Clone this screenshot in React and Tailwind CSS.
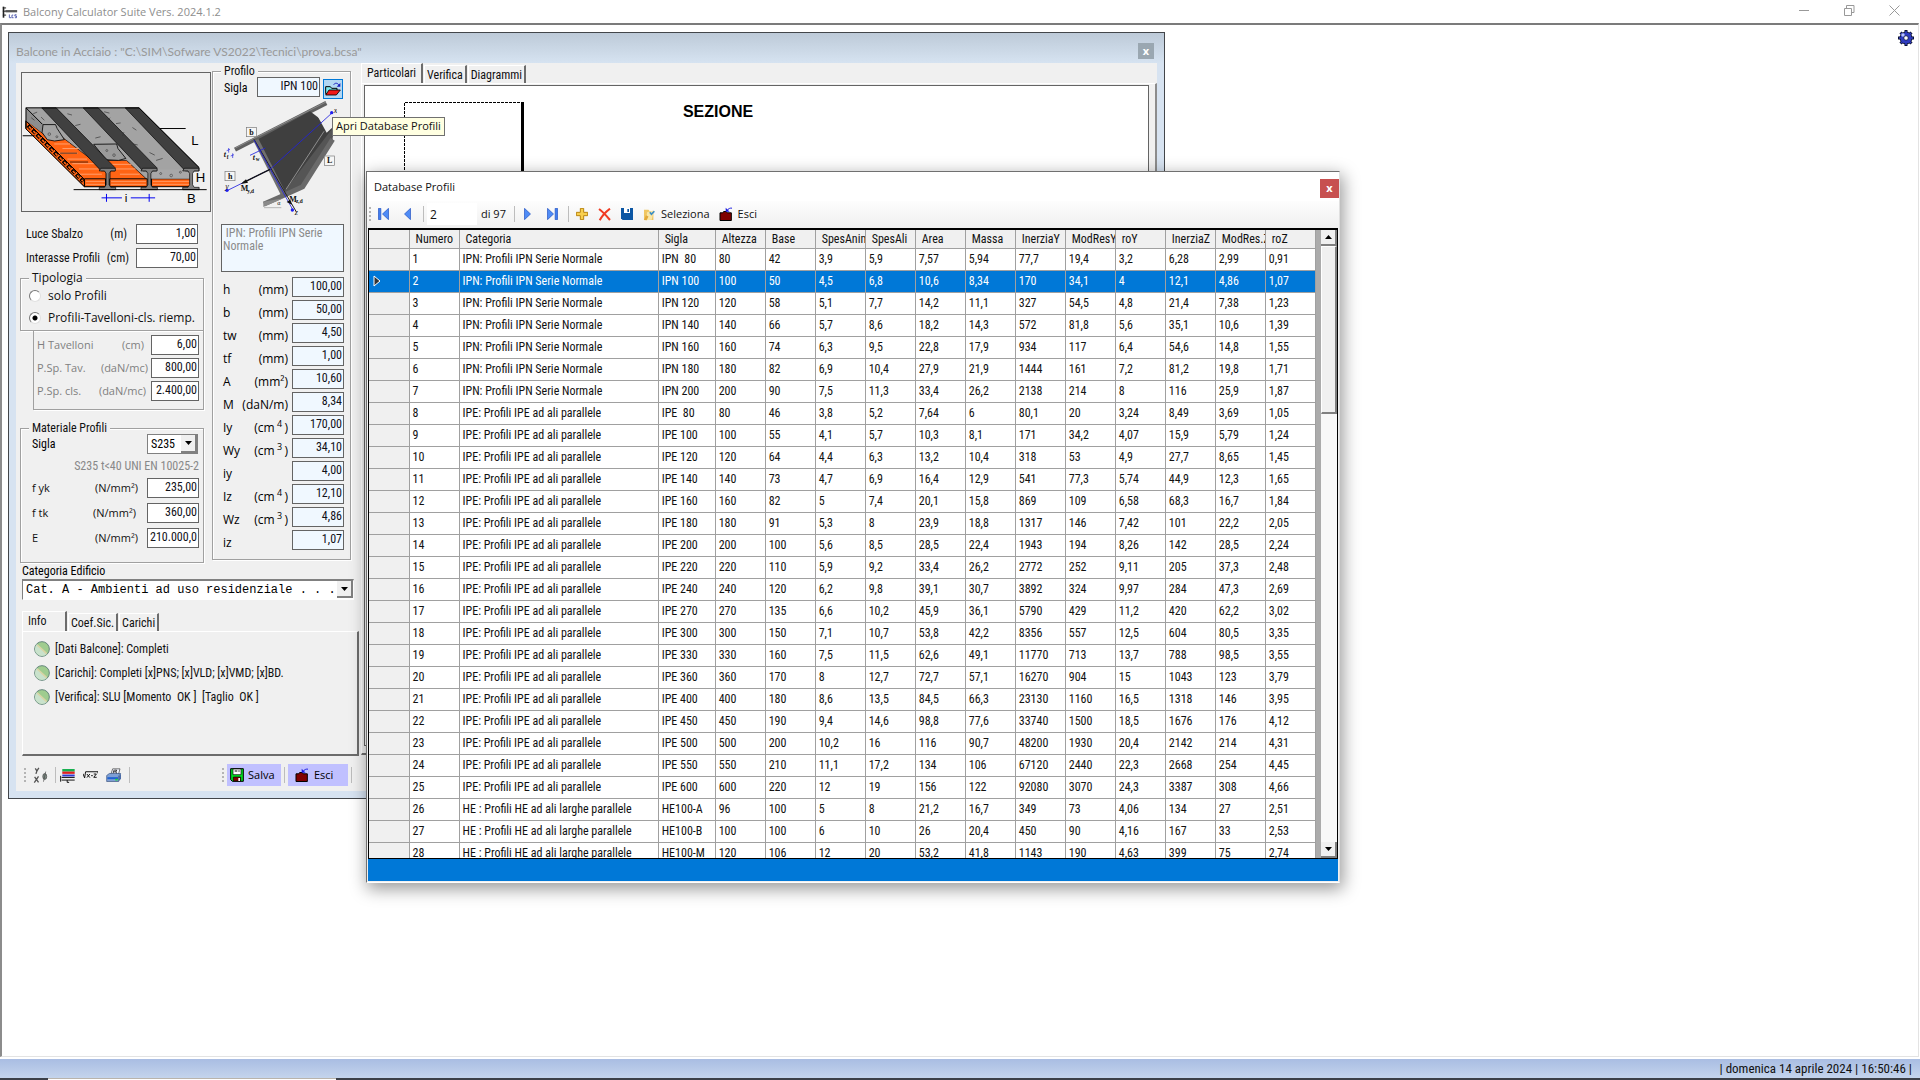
import React from 'react';

const COND = "font-['Roboto_Condensed',Roboto,sans-serif]";
const OPEN = "font-['Open_Sans',sans-serif]";

/* ---------- icons ---------- */

const AppIcon = () => (
  <svg viewBox="0 0 48 40" className="h-[13px] w-4 shrink-0">
    <path d="M4 2v34" stroke="#222" strokeWidth="5" />
    <path d="M2 6h10M2 16h10M2 28h10" stroke="#222" strokeWidth="3" />
    <path d="M10 16h36" stroke="#555" strokeWidth="7" />
    <path d="M22 26v10h6M34 28h-4v8h5M44 27h-5v4h5v5h-5" fill="none" stroke="#5560b0" strokeWidth="3" />
  </svg>
);

const GearIcon = () => (
  <svg viewBox="0 0 32 32" className="size-4">
    <g stroke="#0b1030" strokeWidth="6">
      <path d="M16 0v32M0 16h32M5 5l22 22M27 5L5 27" />
    </g>
    <circle cx="16" cy="16" r="12" fill="#2f3cc0" stroke="#0b1030" strokeWidth="2" />
    <g stroke="#2f3cc0" strokeWidth="3">
      <path d="M16 2v6M16 24v6M2 16h6M24 16h6M6 6l4 4M22 22l4 4M26 6l-4 4M10 22l-4 4" />
    </g>
    <circle cx="10" cy="10" r="3.5" fill="#b9c4ff" />
    <circle cx="16" cy="16" r="4.5" fill="#fff" stroke="#0b1030" strokeWidth="1.5" />
  </svg>
);

const FolderIcon = () => (
  <svg viewBox="0 0 48 42" className="h-[14px] w-4">
    <path d="M2 14h14l4 5h16v16H2z" fill="#7fe9ef" stroke="#000" strokeWidth="3" />
    <path d="M12 24h34L34 39H2z" fill="#f01818" stroke="#000" strokeWidth="2.5" />
    <path d="M26 8c4-6 12-6 16 2" fill="none" stroke="#1c1cc0" strokeWidth="3" />
    <path d="M46 3v11H35z" fill="#1c1cc0" />
  </svg>
);

const ExitIcon = () => (
  <svg viewBox="0 0 42 44" className="h-[15px] w-[14px]">
    <path d="M3 17h8l3-4h8l3 4h12v23H3z" fill="#800000" stroke="#000" strokeWidth="3" />
    <path d="M24 10c4-6 10-8 15-7" fill="none" stroke="#1c1ce0" strokeWidth="3" />
    <path d="M20 2v12h12z" fill="#1c1ce0" />
  </svg>
);

const DiskIcon = () => (
  <svg viewBox="0 0 42 42" className="size-[14px]">
    <path d="M2 2h38v38H7l-5-5z" fill="#00e020" stroke="#000" strokeWidth="3" />
    <path d="M9 3h24v17H9z" fill="#fff" stroke="#000" strokeWidth="2" />
    <path d="M14 9h8M25 9h4" stroke="#000" strokeWidth="3" />
    <path d="M10 27h22v12H10z" fill="#800000" stroke="#000" strokeWidth="2" />
    <path d="M25 30h5v9h-5z" fill="#fff" />
  </svg>
);

const BlueDisk = () => (
  <svg viewBox="0 0 36 36" className="size-3">
    <path d="M0 0h36v36H5l-5-5z" fill="#0b56a4" />
    <path d="M9 0h18v15H9z" fill="#fff" />
    <path d="M19 3h5v9h-5z" fill="#0b56a4" />
  </svg>
);

const Arrow = ({ left, bar }) => (
  <svg viewBox="0 0 32 36" className={left ? 'h-3 w-[11px]' : 'h-3 w-[11px] -scale-x-100'}>
    {bar && <path d="M1 1h7v34H1z" fill="#3f7df0" stroke="#1f4fc0" strokeWidth="2" />}
    <path d="M31 1v34L13 18z" fill="#4f8cf6" stroke="#1f4fc0" strokeWidth="2" />
  </svg>
);

const PlusIcon = () => (
  <svg viewBox="0 0 36 36" className="size-3">
    <path d="M13 1h10v12h12v10H23v12H13V23H1V13h12z" fill="#f8cf4e" stroke="#b88410" strokeWidth="3" />
  </svg>
);

const CrossIcon = () => (
  <svg viewBox="0 0 38 38" className="size-[13px]">
    <path d="M3 3c12 9 22 20 32 32M35 2C23 11 12 23 5 36" fill="none" stroke="#f03a22" strokeWidth="6" />
  </svg>
);

const SelectIcon = () => (
  <svg viewBox="0 0 38 40" className="size-[13px]">
    <path d="M2 5h14l3 4h12v28H2z" fill="#f0c661" />
    <path d="M12 12l20-4-6 28-18 2z" fill="#f9e6a6" />
    <path d="M8 22l8 4-6 12-8-1z" fill="#e2a93a" />
    <path d="M20 13l5 6 9-9" fill="none" stroke="#3c8ec4" strokeWidth="5" />
  </svg>
);

const FormulaIcon = () => (
  <svg viewBox="0 0 44 52" className="h-[17px] w-[15px]">
    <path d="M6 4l5 8 6-9M11 12l-3 9M4 30l12 17M16 29L3 48" fill="none" stroke="#555" strokeWidth="4" />
    <ellipse cx="35" cy="29" rx="6" ry="9" fill="#7d8b84" stroke="#444" strokeWidth="2" />
    <path d="M38 14l-7 31" stroke="#444" strokeWidth="2" />
  </svg>
);

const LayersIcon = () => (
  <svg viewBox="0 0 46 46" className="size-[15px]">
    <path d="M7 3h38v8H7z" fill="#18b050" />
    <path d="M7 11h38v7H7z" fill="#e02020" />
    <path d="M7 20h38v6H7z" fill="#3038d0" />
    <path d="M5 29h40M5 37h40" stroke="#111" strokeWidth="3" />
    <path d="M2 24v18M22 37v7h6" fill="none" stroke="#111" strokeWidth="3" />
  </svg>
);

const RootIcon = () => (
  <svg viewBox="0 0 46 24" className="h-2 w-[15px]">
    <path d="M0 8l5 13 3-19h38v5" fill="none" stroke="#111" strokeWidth="3" />
    <path d="M12 9l9 11M21 9l-9 11M25 14h5M33 9h8l-8 10h9" fill="none" stroke="#111" strokeWidth="3" />
  </svg>
);

const PrinterIcon = () => (
  <svg viewBox="0 0 48 44" className="h-[15px] w-4">
    <path d="M14 20L20 2h22l-5 18z" fill="#f4f6ff" stroke="#333" strokeWidth="2" />
    <path d="M24 6l-3 10M25 6h7l-2 5h-6M30 11l2 6" stroke="#111" strokeWidth="2.5" fill="none" />
    <path d="M2 22l8-6h34l-6 8v16H2z" fill="#7f9fd4" stroke="#36517e" strokeWidth="2" />
    <path d="M4 27h32v6H4z" fill="#1f62d0" />
    <path d="M38 24l7-8v16l-7 8z" fill="#4a6ba6" />
    <path d="M28 32h7v5h-7z" fill="#20e030" />
  </svg>
);

const StatusDot = () => (
  <svg viewBox="0 0 48 48" className="size-4 shrink-0">
    <circle cx="24" cy="24" r="22" fill="#9fcc8f" stroke="#64867c" strokeWidth="3" />
    <path d="M9 9l30 30a21 21 0 0 1-30 0 21 21 0 0 1 0-30z" fill="#c9e2cc" />
    <path d="M10 12l28 26" stroke="#d9d3a4" strokeWidth="5" />
  </svg>
);

const Chevron = () => (
  <svg viewBox="0 0 7 4" className="h-1 w-[7px]"><path d="M0 0h7L3.500 4z" fill="#000" /></svg>
);

/* ---------- drawings ---------- */

const SlabDrawing = () => (
  <svg viewBox="63 216 570 420" className="h-[140px] w-[190px] border border-[#646464]">
    <path d="M74 322H418L600 506V515H575V538L250 562L74 385z" fill="#a3a3a3" />
    <path d="M74 360L140 412H185L318 513V562H252L74 386z" fill="#ff6414" stroke="#000" strokeWidth="2" />
    <path d="M322 482H380L440 538V562H330V513z" fill="#ff6414" stroke="#000" strokeWidth="2" />
    <g stroke="#ffa070" strokeWidth="3">
      <path d="M160 432h48M185 446h50M172 460h60M200 478h60M215 492h70M235 508h60M225 524h80M335 494h60M345 508h62M360 524h60" />
    </g>
    <path d="M178 460h52M208 487h55" stroke="#000" strokeWidth="2" />
    <path d="M74 362L252 540V562L74 386z" fill="#ff6414" stroke="#000" strokeWidth="3" />
    <path d="M80 376l168 170" stroke="#000" strokeWidth="11" strokeDasharray="14 5" />
    <path d="M83 379l164 166" stroke="#ff6414" strokeWidth="5" strokeDasharray="9 10" />
    <path d="M252 538h64v24h-64zM329 538h114v24H329zM456 538h119v24H456z" fill="#ff6414" stroke="#000" strokeWidth="3" />
    <path d="M256 546h58M256 555h58M333 546h106M333 555h106M460 546h111M460 555h111" stroke="#ff9560" strokeWidth="3" />
    <path d="M74 322L162 409L140 418L124 397L74 361z" fill="#8d8d8d" />
    <path d="M74 322L124 372M74 322v63" stroke="#000" strokeWidth="3" />
    <path d="M126 373h38l5 12 22 34-30 4-22-4-16-22z" fill="#a3a3a3" stroke="#000" strokeWidth="2.500" />
    <path d="M280 433l70-1 4 14 24 30-22 6-38-2z" fill="#9b9b9b" stroke="#000" strokeWidth="2.500" />
    <path d="M462 510h112v28H456z" fill="#a8a8a8" />
    <g fill="#404040" stroke="#000" strokeWidth="2">
      <path d="M122 322h44L345 504v10h-42z" />
      <path d="M248 322h46L472 504v10h-42z" />
      <path d="M376 322h42L601 504v10h-42z" />
    </g>
    <g stroke="#000" strokeWidth="2">
      <path d="M302 506h44v8h-14l-5 8v34l5 8h15v7h-50v-7h16l5-8v-34l-5-8h-16z" fill="#808080" />
      <path d="M429 506h44v8h-14l-5 8v34l5 8h15v7h-50v-7h16l5-8v-34l-5-8h-16z" fill="#808080" />
      <path d="M556 506h44v8h-14l-5 8v34l5 8h15v7h-50v-7h16l5-8v-34l-5-8h-16z" fill="#808080" />
    </g>
    <path d="M74 322H418L601 504" fill="none" stroke="#000" strokeWidth="3" />
    <path d="M96 340l12-5M120 350l10 10M200 340l14 4M240 372l-16 4M232 392l12 10M285 414l16-4M312 334l16 4M348 370l14-2M372 396l-4 12M400 432l14 3M450 458l16 8M470 482l20-6M330 352l-8 8M398 382l12 8M90 352l10 8" stroke="#333" strokeWidth="2" fill="none" />
    <g fill="none" stroke="#444" strokeWidth="2">
      <circle cx="145" cy="402" r="4" /><circle cx="168" cy="410" r="3" /><circle cx="320" cy="452" r="3" /><circle cx="342" cy="466" r="4" />
      <circle cx="484" cy="522" r="3" /><circle cx="516" cy="528" r="4" /><circle cx="544" cy="518" r="3" />
    </g>
    <path d="M64 407h36M482 385h78M219 571h405" stroke="#000" strokeWidth="3" />
    <path d="M304 596h62M393 596h74M319 584v24M449 584v24" stroke="#0000f0" strokeWidth="3" />
    <g fontFamily="Liberation Sans" fontSize="40" fill="#000">
      <text x="577" y="435">L</text>
      <text x="591" y="549">H</text>
      <text x="564" y="612">B</text>
      <text x="375" y="609" fontSize="36">i</text>
    </g>
  </svg>
);

const ProfileDrawing = () => (
  <svg viewBox="663 300 348 354" className="mt-px h-[118px] w-[116px]">
    <path d="M705 449L979 309" stroke="#606060" strokeWidth="13" />
    <path d="M706 444L978 306" stroke="#8a8a8a" strokeWidth="3" />
    <path d="M770 420L930 334L998 385V410L908 556L852 578z" fill="#3f3f3f" />
    <path d="M946 336l34 62 18-16v-48z" fill="#f0f0f0" />
    <path d="M998 384L852 575l8 10 48-20 90-140z" fill="#555" />
    <path d="M972 394L858 568" stroke="#8e8e8e" strokeWidth="3" />
    <path d="M768 420L850 582" stroke="#707070" strokeWidth="16" />
    <path d="M792 612L852 586L908 560L998 418" fill="none" stroke="#6a6a6a" strokeWidth="15" />
    <path d="M790 605v16l60-26" fill="#8a8a8a" />
    <path d="M762 418L888 634" stroke="#222" strokeWidth="3" />
    <path d="M681 572L810 508L998 337M762 420L880 632M750 466l46-22" stroke="#2020e0" strokeWidth="2.500" fill="none" />
    <path d="M730 548l80-40" stroke="#111" strokeWidth="4" />
    <path d="M722 552l16-14 6 10zM876 614l-16-8 10-7z" fill="#111" />
    <g fill="#2020f0"><circle cx="995" cy="338" r="5" /><circle cx="681" cy="571" r="5" /><circle cx="877" cy="630" r="5" /></g>
    <path d="M686 444v14M680 452l10-4M698 460v14M692 468l10-4" stroke="#2020e0" strokeWidth="2" />
    <path d="M792 623h52" stroke="#999" strokeWidth="2" />
    <g fill="#f6f6f6" stroke="#777" strokeWidth="2">
      <rect x="739" y="382" width="30" height="28" /><rect x="973" y="468" width="30" height="28" /><rect x="675" y="514" width="30" height="28" />
    </g>
    <g fontFamily="Liberation Serif" fill="#111" fontSize="24" fontWeight="bold">
      <text x="748" y="405">b</text><text x="981" y="490">L</text><text x="684" y="536">h</text>
      <text x="671" y="472" fontStyle="italic">t</text><text x="680" y="478" fontSize="16">f</text>
      <text x="758" y="480" fontStyle="italic">t</text><text x="767" y="484" fontSize="16">w</text>
      <text x="722" y="574">M</text><text x="742" y="578" fontSize="16">y,d</text>
      <text x="868" y="606">M</text><text x="888" y="610" fontSize="16">z,d</text>
      <text x="1001" y="338" fontStyle="italic" fontWeight="normal">x</text>
      <text x="676" y="566" fontStyle="italic" fontWeight="normal">y</text>
      <text x="884" y="646" fontStyle="italic" fontWeight="normal">z</text>
      <text x="832" y="616" fontSize="18" fontWeight="normal">α</text>
    </g>
  </svg>
);

/* ---------- small controls ---------- */

const Grip = () => (
  <span className="flex w-[2px] flex-col gap-[2px]">
    {[0, 1, 2, 3].map((i) => <i key={i} className="block size-[2px] bg-[#b4b4b4]" />)}
  </span>
);

const Sep = () => <span className="block h-4 w-px bg-[#bdbdbd]" />;

const Value = ({ id, value, wide, blue }) => (
  <input
    id={id}
    type="text"
    defaultValue={value}
    className={`${COND} h-5 shrink-0 border border-[#646464] pr-px pb-[3px] text-right text-[12px] leading-4 text-[#101018] ${wide} ${blue ? 'bg-[#f0f8ff]' : 'bg-white'}`}
  />
);

const Field = ({ id, label, unit, value, width, cond, dim, pad = 'pr-[5px]' }) => (
  <div className="flex h-5 items-center">
    <label
      htmlFor={id}
      className={`flex flex-1 justify-between ${pad} ${cond ? COND + ' text-[12px]' : OPEN + ' text-[11px]'} ${dim ? 'text-[#808080]' : 'text-[#111]'}`}
    >
      <span>{label}</span>
      <span>{unit}</span>
    </label>
    <Value id={id} value={value} wide={width} />
  </div>
);

const Group = ({ title, className, children }) => (
  <fieldset className={`min-w-0 border border-[#a0a0a0] shadow-[1px_1px_0_#fff,inset_1px_1px_0_#fff] ${className}`}>
    <legend className={`${title.className} bg-[#f0f0f0] px-[3px] leading-3 text-[#111]`}>{title.text}</legend>
    {children}
  </fieldset>
);

const Tab = ({ active, children }) => (
  <button
    type="button"
    role="tab"
    aria-selected={!!active}
    className={`${COND} border-t border-r-2 border-l border-t-white border-r-[#6c6c6c] border-l-white text-[12px] leading-4 text-[#111] ${active ? 'h-5 pr-[5px] pb-px pl-[5px]' : 'h-[18px] px-[2px]'}`}
  >
    {children}
  </button>
);

/* ---------- data ---------- */

const I = 'IPN: Profili IPN Serie Normale';
const E = 'IPE: Profili IPE ad ali parallele';
const H = 'HE : Profili HE ad ali larghe parallele';
const columns = ['Numero', 'Categoria', 'Sigla', 'Altezza', 'Base', 'SpesAnima', 'SpesAli', 'Area', 'Massa', 'InerziaY', 'ModResY', 'roY', 'InerziaZ', 'ModRes.Z', 'roZ'];
const profiles = [
  [I, 'IPN  80', '80 42 3,9 5,9 7,57 5,94 77,7 19,4 3,2 6,28 2,99 0,91'],
  [I, 'IPN 100', '100 50 4,5 6,8 10,6 8,34 170 34,1 4 12,1 4,86 1,07'],
  [I, 'IPN 120', '120 58 5,1 7,7 14,2 11,1 327 54,5 4,8 21,4 7,38 1,23'],
  [I, 'IPN 140', '140 66 5,7 8,6 18,2 14,3 572 81,8 5,6 35,1 10,6 1,39'],
  [I, 'IPN 160', '160 74 6,3 9,5 22,8 17,9 934 117 6,4 54,6 14,8 1,55'],
  [I, 'IPN 180', '180 82 6,9 10,4 27,9 21,9 1444 161 7,2 81,2 19,8 1,71'],
  [I, 'IPN 200', '200 90 7,5 11,3 33,4 26,2 2138 214 8 116 25,9 1,87'],
  [E, 'IPE  80', '80 46 3,8 5,2 7,64 6 80,1 20 3,24 8,49 3,69 1,05'],
  [E, 'IPE 100', '100 55 4,1 5,7 10,3 8,1 171 34,2 4,07 15,9 5,79 1,24'],
  [E, 'IPE 120', '120 64 4,4 6,3 13,2 10,4 318 53 4,9 27,7 8,65 1,45'],
  [E, 'IPE 140', '140 73 4,7 6,9 16,4 12,9 541 77,3 5,74 44,9 12,3 1,65'],
  [E, 'IPE 160', '160 82 5 7,4 20,1 15,8 869 109 6,58 68,3 16,7 1,84'],
  [E, 'IPE 180', '180 91 5,3 8 23,9 18,8 1317 146 7,42 101 22,2 2,05'],
  [E, 'IPE 200', '200 100 5,6 8,5 28,5 22,4 1943 194 8,26 142 28,5 2,24'],
  [E, 'IPE 220', '220 110 5,9 9,2 33,4 26,2 2772 252 9,11 205 37,3 2,48'],
  [E, 'IPE 240', '240 120 6,2 9,8 39,1 30,7 3892 324 9,97 284 47,3 2,69'],
  [E, 'IPE 270', '270 135 6,6 10,2 45,9 36,1 5790 429 11,2 420 62,2 3,02'],
  [E, 'IPE 300', '300 150 7,1 10,7 53,8 42,2 8356 557 12,5 604 80,5 3,35'],
  [E, 'IPE 330', '330 160 7,5 11,5 62,6 49,1 11770 713 13,7 788 98,5 3,55'],
  [E, 'IPE 360', '360 170 8 12,7 72,7 57,1 16270 904 15 1043 123 3,79'],
  [E, 'IPE 400', '400 180 8,6 13,5 84,5 66,3 23130 1160 16,5 1318 146 3,95'],
  [E, 'IPE 450', '450 190 9,4 14,6 98,8 77,6 33740 1500 18,5 1676 176 4,12'],
  [E, 'IPE 500', '500 200 10,2 16 116 90,7 48200 1930 20,4 2142 214 4,31'],
  [E, 'IPE 550', '550 210 11,1 17,2 134 106 67120 2440 22,3 2668 254 4,45'],
  [E, 'IPE 600', '600 220 12 19 156 122 92080 3070 24,3 3387 308 4,66'],
  [H, 'HE100-A', '96 100 5 8 21,2 16,7 349 73 4,06 134 27 2,51'],
  [H, 'HE100-B', '100 100 6 10 26 20,4 450 90 4,16 167 33 2,53'],
  [H, 'HE100-M', '120 106 12 20 53,2 41,8 1143 190 4,63 399 75 2,74'],
];

const sup = (base, n) => <>({base}<sup className="text-[9px]">{n}</sup>)</>;
const props = [
  ['h', '(mm)', '100,00'], ['b', '(mm)', '50,00'], ['tw', '(mm)', '4,50'], ['tf', '(mm)', '1,00'],
  ['A', '(mm²)', '10,60'], ['M', '(daN/m)', '8,34'], ['Iy', sup('cm', ' 4 '), '170,00'], ['Wy', sup('cm', ' 3 '), '34,10'],
  ['iy', '', '4,00'], ['Iz', sup('cm', ' 4 '), '12,10'], ['Wz', sup('cm', ' 3 '), '4,86'], ['iz', '', '1,07'],
];

/* ---------- panels ---------- */

function LeftPanel() {
  return (
    <div className="flex w-[345px] shrink-0 flex-col pl-1">
      <div className="flex">
        <div className="flex w-[192px] flex-col pt-[9px]">
          <div className="pl-px"><SlabDrawing /></div>
          <div className="flex flex-col gap-1 pt-3 pr-[14px] pl-[6px]">
            <Field cond id="luce" label="Luce Sbalzo" unit="(m)" value="1,00" width="w-[62px]" pad="pr-[9px]" />
            <Field cond id="inter" label="Interasse Profili" unit="(cm)" value="70,00" width="w-[62px]" pad="pr-[7px]" />
          </div>
          <Group className="mt-1 mr-2 h-[59px] pl-2" title={{ text: 'Tipologia', className: OPEN + ' text-[12px]' }}>
            {['solo Profili', 'Profili-Tavelloni-cls. riemp.'].map((t, i) => (
              <label key={t} className={`${OPEN} flex h-[22px] items-center gap-[7px] pt-[2px] text-[12px] whitespace-nowrap text-[#111]`}>
                <input
                  type="radio"
                  name="tipo"
                  defaultChecked={i === 1}
                  className="size-3 shrink-0 appearance-none rounded-full border border-t-[#777] border-r-[#e0e0e0] border-b-[#e0e0e0] border-l-[#777] bg-white checked:bg-[radial-gradient(#000_0_2px,#fff_3px)]"
                />
                {t}
              </label>
            ))}
          </Group>
          <div className="mr-2 ml-[13px] flex flex-col gap-[3px] border border-t-0 border-[#a0a0a0] pt-1 pr-1 pb-2 pl-[3px] shadow-[1px_1px_0_#fff]">
            <Field dim id="htav" label="H Tavelloni" unit="(cm)" value="6,00" width="w-12" pad="pr-[7px]" />
            <Field dim id="ptav" label="P.Sp. Tav." unit="(daN/mc)" value="800,00" width="w-12" pad="pr-[3px]" />
            <Field dim id="pcls" label="P.Sp. cls." unit="(daN/mc)" value="2.400,00" width="w-12" />
          </div>
          <Group className="mt-3 mr-2 h-[141px] pr-1 pl-[11px]" title={{ text: 'Materiale Profili', className: COND + ' -ml-[3px] text-[12px]' }}>
            <div className="flex h-5 items-center justify-between pr-px">
              <label htmlFor="mat" className={`${COND} text-[12px]`}>Sigla</label>
              <div className="relative">
                <select id="mat" className={`${COND} block h-5 w-[51px] appearance-none border border-[#808080] bg-white pl-[3px] text-[12px] leading-4`}>
                  <option>S235</option>
                </select>
                <span className="pointer-events-none absolute inset-y-px right-px flex w-4 items-center justify-center border-r-2 border-b-2 border-[#808080] bg-[#f0f0f0]"><Chevron /></span>
              </div>
            </div>
            <p className={`${COND} h-6 text-right text-[12px] leading-6 whitespace-nowrap text-[#888]`}>S235 t&lt;40 UNI EN 10025-2</p>
            <div className="flex flex-col gap-[5px]">
              <Field id="fyk" label="f yk" unit="(N/mm²)" value="235,00" width="w-[52px]" pad="pr-[9px]" />
              <Field id="ftk" label="f tk" unit="(N/mm²)" value="360,00" width="w-[52px]" pad="pr-[11px]" />
              <Field id="e" label="E" unit="(N/mm²)" value="210.000,0" width="w-[52px]" pad="pr-[9px]" />
            </div>
          </Group>
        </div>

        <Group className="mt-[2px] h-[495px] w-[139px] pr-[6px] pl-2" title={{ text: 'Profilo', className: COND + ' text-[12px]' }}>
          <div className="-mt-[2px] flex items-center">
            <label htmlFor="sigla" className={`${COND} w-[36px] pt-[2px] pl-[3px] text-[12px]`}>Sigla</label>
            <Value id="sigla" value="IPN 100" wide="w-[63px]" blue />
            <button type="button" aria-label="Apri Database Profili" className="mt-1 ml-[3px] flex size-5 items-center justify-center border border-[#0078d7] bg-[#b3d7f3]"><FolderIcon /></button>
          </div>
          <ProfileDrawing />
          <textarea
            aria-label="Categoria profilo"
            defaultValue=" IPN: Profili IPN Serie Normale"
            className={`${COND} mt-[6px] mb-[5px] block h-12 w-[123px] resize-none overflow-hidden border border-[#646464] bg-[#f0f8ff] px-px pt-[2px] text-[12px] leading-[13px] text-[#8a8a8a]`}
          />
          <div className="flex flex-col gap-[3px]">
            {props.map(([l, u, v], i) => (
              <div key={l} className="flex h-5 items-center">
                <label htmlFor={'p' + i} className={`${OPEN} flex flex-1 justify-between pt-[5px] pr-[4px] pl-[2px] text-[12px] leading-4 whitespace-pre`}>
                  <span>{l}</span><span>{u}</span>
                </label>
                <Value id={'p' + i} value={v} wide="w-[52px]" blue />
              </div>
            ))}
          </div>
        </Group>
      </div>

      <label htmlFor="cat" className={`${COND} ml-[2px] text-[12px] leading-4`}>Categoria Edificio</label>
      <div className="relative ml-[2px] w-[332px]">
        <select id="cat" className="block h-[21px] w-full appearance-none border border-t-2 border-[#808080] border-r-white border-b-white bg-white pl-[3px] font-['Liberation_Mono',monospace] text-[12px] leading-4">
          <option>Cat. A - Ambienti ad uso residenziale . . .</option>
        </select>
        <span className="pointer-events-none absolute inset-y-[2px] right-px flex w-4 items-center justify-center border-r-2 border-b-2 border-[#808080] bg-[#f0f0f0]"><Chevron /></span>
      </div>

      <div role="tablist" className="mt-[11px] ml-[2px] flex items-end gap-px">
        <span className="flex w-[45px] *:flex-1 *:text-left"><Tab active>Info</Tab></span>
        <Tab>Coef.Sic.</Tab>
        <Tab>Carichi</Tab>
      </div>
      <div className={`${COND} ml-[2px] flex h-[125px] w-[337px] flex-col gap-2 border border-r-2 border-b-2 border-white border-r-[#6c6c6c] border-b-[#6c6c6c] pt-[9px] pl-[11px] text-[12px] leading-4 whitespace-pre text-[#111]`}>
        {['[Dati Balcone]: Completi', '[Carichi]: Completi [x]PNS; [x]VLD; [x]VMD; [x]BD.', '[Verifica]: SLU [Momento  OK ]  [Taglio  OK ]'].map((t) => (
          <p key={t} className="flex items-center gap-[5px]"><StatusDot />{t}</p>
        ))}
      </div>
      <div className="mt-2 ml-1 flex h-[22px] w-[328px] items-center justify-between">
        <div className="flex items-center gap-[7px]">
          <Grip />
          <button type="button" aria-label="Formula"><FormulaIcon /></button>
          <span className="flex items-center gap-1"><Sep /><button type="button" aria-label="Strati"><LayersIcon /></button></span>
          <button type="button" aria-label="Radice" className="ml-px"><RootIcon /></button>
          <button type="button" aria-label="Stampa" className="ml-px"><PrinterIcon /></button>
          <Sep />
        </div>
        <div className={`${OPEN} flex items-center gap-[3px] text-[11px]`}>
          <Grip />
          <button type="button" className="flex h-[22px] w-[54px] items-center gap-1 bg-[#c0c0ff] pl-[3px]"><DiskIcon />Salva</button>
          <Sep />
          <button type="button" className="flex h-[22px] w-[60px] items-center gap-[5px] bg-[#c0c0ff] pl-[7px]"><ExitIcon />Esci</button>
          <Sep />
        </div>
      </div>
    </div>
  );
}

function BalconyWindow() {
  return (
    <section className="absolute top-[7px] left-[6px] flex h-[767px] w-[1157px] flex-col border border-[#43464a] bg-[#d7e3f1] px-[7px] pb-[7px]">
      <header className="-mx-[7px] flex h-[30px] items-center justify-between bg-linear-to-b from-[#bdcad8] to-[#d6e3f1] pt-[6px] pr-[10px] pl-[7px]">
        <h2 className="pt-px font-['Lato',sans-serif] text-[12px] text-[#999]">Balcone in Acciaio : &quot;C:\SIM\Sofware VS2022\Tecnici\prova.bcsa&quot;</h2>
        <button type="button" aria-label="Chiudi balcone" className="flex size-4 items-center justify-center bg-[#9aa7b1] pb-[2px] text-[11px] leading-none font-bold text-white">x</button>
      </header>
      <div className="flex min-h-0 flex-1 bg-[#f0f0f0]">
        <LeftPanel />
        <div className="flex flex-1 flex-col pb-9">
          <div role="tablist" className="flex items-end gap-px">
            <Tab active>Particolari</Tab>
            <Tab>Verifica</Tab>
            <Tab>Diagrammi</Tab>
          </div>
          <div className="flex flex-1 flex-col border border-r-2 border-b-2 border-white border-r-[#8c8c8c] border-b-[#6c6c6c] p-[1px] pr-[6px] pb-[7px] pl-[2px]">
            <div className="relative flex-1 border border-[#646464] bg-white">
              <svg className="absolute top-4 left-[39px] h-[300px] w-[120px]" viewBox="0 0 120 300">
                <path d="M.5 300V.5H118" fill="none" stroke="#000" strokeDasharray="3 1" />
                <path d="M118.500 0v300" stroke="#000" strokeWidth="3" />
              </svg>
              <p className="w-[706px] pt-4 text-center font-['Liberation_Sans',sans-serif] text-[16px] leading-5 font-bold">SEZIONE</p>
            </div>
          </div>
        </div>
      </div>
    </section>
  );
}

function ProfilesTable() {
  return (
    <table className={`${COND} w-[947px] table-fixed border-collapse text-[12px] leading-4 text-[#111]`}>
      <colgroup>
        <col className="w-10" /><col className="w-[50px]" /><col className="w-[199px]" /><col className="w-[57px]" />
        {columns.slice(3).map((c) => <col key={c} className="w-[50px]" />)}
      </colgroup>
      <thead>
        <tr className="h-[18px] border-b border-[#a0a0a0] bg-[#f0f0f0]">
          <th aria-label="Riga" className="border-r border-[#a0a0a0]" />
          {columns.map((c) => (
            <th key={c} className="overflow-hidden border-r border-[#a0a0a0] p-0 pt-px pl-[6px] text-left font-normal whitespace-nowrap">{c}</th>
          ))}
        </tr>
      </thead>
      <tbody>
        {profiles.map(([cat, name, nums], i) => (
          <tr key={name} className={`h-[22px] ${i === 1 ? 'bg-[#0078d7] text-white' : 'bg-white'}`}>
            <th className={`border border-l-0 border-[#a0a0a0] p-0 ${i === 1 ? 'bg-[#0078d7]' : 'bg-[#f0f0f0]'}`}>
              {i === 1 && (
                <svg viewBox="0 0 8 12" className="ml-1 h-3 w-2"><path d="M1 1v10l6-5z" fill="#333" stroke="#fff" /></svg>
              )}
            </th>
            {[String(i + 1), cat, name, ...nums.split(' ')].map((v, k) => (
              <td key={k} className="overflow-hidden border border-[#a0a0a0] p-0 pl-[3px] whitespace-pre">{v}</td>
            ))}
          </tr>
        ))}
      </tbody>
    </table>
  );
}

function DatabaseDialog() {
  return (
    <section role="dialog" aria-label="Database Profili" className="absolute top-[146px] left-[364px] flex w-[974px] flex-col border border-[#707070] border-r-[#e0e0e0] border-b-white bg-[#f0f0f0] shadow-[2px_5px_16px_1px_rgba(0,0,0,0.4)]">
      <header className="flex h-[29px] items-center justify-between bg-white pl-[7px]">
        <h2 className={`${OPEN} pt-[2px] text-[11px] text-[#111]`}>Database Profili</h2>
        <button type="button" aria-label="Chiudi database" className="mt-1 flex size-[19px] items-center justify-center bg-[#c75050] pb-[2px] text-[11px] leading-none font-bold text-white">x</button>
      </header>
      <div className={`${OPEN} flex h-[27px] items-center bg-linear-to-b from-[#fdfdfd] to-[#f0f0f0] pb-px pl-[2px] text-[11px] text-[#111]`}>
        <Grip />
        <button type="button" aria-label="Primo" className="ml-[7px]"><Arrow left bar /></button>
        <button type="button" aria-label="Precedente" className="ml-[11px]"><Arrow left /></button>
        <span className="ml-3"><Sep /></span>
        <input aria-label="Record" defaultValue="2" className="ml-[3px] h-[22px] w-[50px] bg-white pl-[3px] text-[12px]" />
        <span className="ml-1 w-[26px] whitespace-nowrap">di 97</span>
        <span className="ml-[7px]"><Sep /></span>
        <button type="button" aria-label="Successivo" className="ml-[9px]"><Arrow /></button>
        <button type="button" aria-label="Ultimo" className="ml-3"><Arrow bar /></button>
        <span className="ml-[10px]"><Sep /></span>
        <button type="button" aria-label="Aggiungi" className="ml-[7px]"><PlusIcon /></button>
        <button type="button" aria-label="Elimina" className="ml-[10px]"><CrossIcon /></button>
        <button type="button" aria-label="Salva dati" className="ml-[10px]"><BlueDisk /></button>
        <button type="button" className="ml-[10px] flex items-center gap-[5px]"><SelectIcon />Seleziona</button>
        <button type="button" className="ml-[9px] flex items-center gap-[5px]"><ExitIcon />Esci</button>
      </div>
      <div className="mr-px ml-px flex h-[631px] border border-t-2 border-black bg-[#ababab]">
        <div className="min-w-0 flex-1 overflow-hidden"><ProfilesTable /></div>
        <div className="flex w-4 shrink-0 flex-col bg-[#f8f8f8]">
          <button type="button" aria-label="Su" className="flex h-4 items-center justify-center border-r-2 border-b-2 border-[#808080] bg-[#f0f0f0]"><span className="rotate-180"><Chevron /></span></button>
          <div className="h-[168px] border-t border-r-2 border-b-2 border-l border-white border-r-[#808080] border-b-[#808080] bg-[#f0f0f0]" />
          <div className="flex-1" />
          <button type="button" aria-label="Giù" className="flex h-4 items-center justify-center border-r-2 border-b-2 border-[#808080] bg-[#f0f0f0]"><Chevron /></button>
        </div>
      </div>
      <div className="mr-px ml-px h-[22px] bg-[#0078d7]" />
      <div className="h-px bg-[#f0f0f0]" />
    </section>
  );
}

export default function App() {
  return (
    <div className="flex h-screen flex-col bg-white">
      <header className="flex h-[23px] shrink-0 items-center justify-between pr-5 pl-[2px]">
        <div className="flex items-center gap-[5px] pt-px">
          <AppIcon />
          <h1 className={`${OPEN} text-[11px] text-[#8e8e8e]`}>Balcony Calculator Suite Vers. 2024.1.2</h1>
        </div>
        <div className="flex items-center gap-[34px] pb-[3px]">
          <button type="button" aria-label="Riduci"><svg viewBox="0 0 11 11" className="size-[11px]"><path d="M0 5.500h10" stroke="#999" /></svg></button>
          <button type="button" aria-label="Ripristina"><svg viewBox="0 0 11 11" className="size-[11px]"><path d="M.5 3.500h7v7h-7zM2.500 3V.5h7.500v7H8" fill="none" stroke="#999" /></svg></button>
          <button type="button" aria-label="Chiudi"><svg viewBox="0 0 11 11" className="size-[11px]"><path d="M.5 .5l10 10M10.500 .5l-10 10" stroke="#999" /></svg></button>
        </div>
      </header>
      <main className="relative mr-px min-h-0 flex-1 border-t-2 border-r border-b border-l-2 border-t-[#7b7b7b] border-r-[#e3e3e3] border-b-[#e3e3e3] border-l-[#8c8c8c]">
        <button type="button" aria-label="Impostazioni" className="absolute top-[5px] right-1"><GearIcon /></button>
        <BalconyWindow />
        <DatabaseDialog />
        <span role="tooltip" className={`${OPEN} absolute top-[92px] left-[330px] flex h-[19px] items-center border border-[#707070] bg-[#ffffe1] px-[3px] text-[11px] whitespace-nowrap text-[#111]`}>Apri Database Profili</span>
      </main>
      <footer className="shrink-0 pt-[2px]">
        <div className={`${COND} flex h-[19px] items-center justify-end bg-linear-to-b from-[#a9bde3] to-[#c4d4ec] pt-px pr-2 text-[13px] text-[#111]`}>| domenica 14 aprile 2024 | 16:50:46 |</div>
        <div className="flex h-[2px] bg-[#3c4048]">
          <span className="ml-12 w-72 border-t border-[#b9b4ac] bg-white" />
        </div>
      </footer>
    </div>
  );
}
